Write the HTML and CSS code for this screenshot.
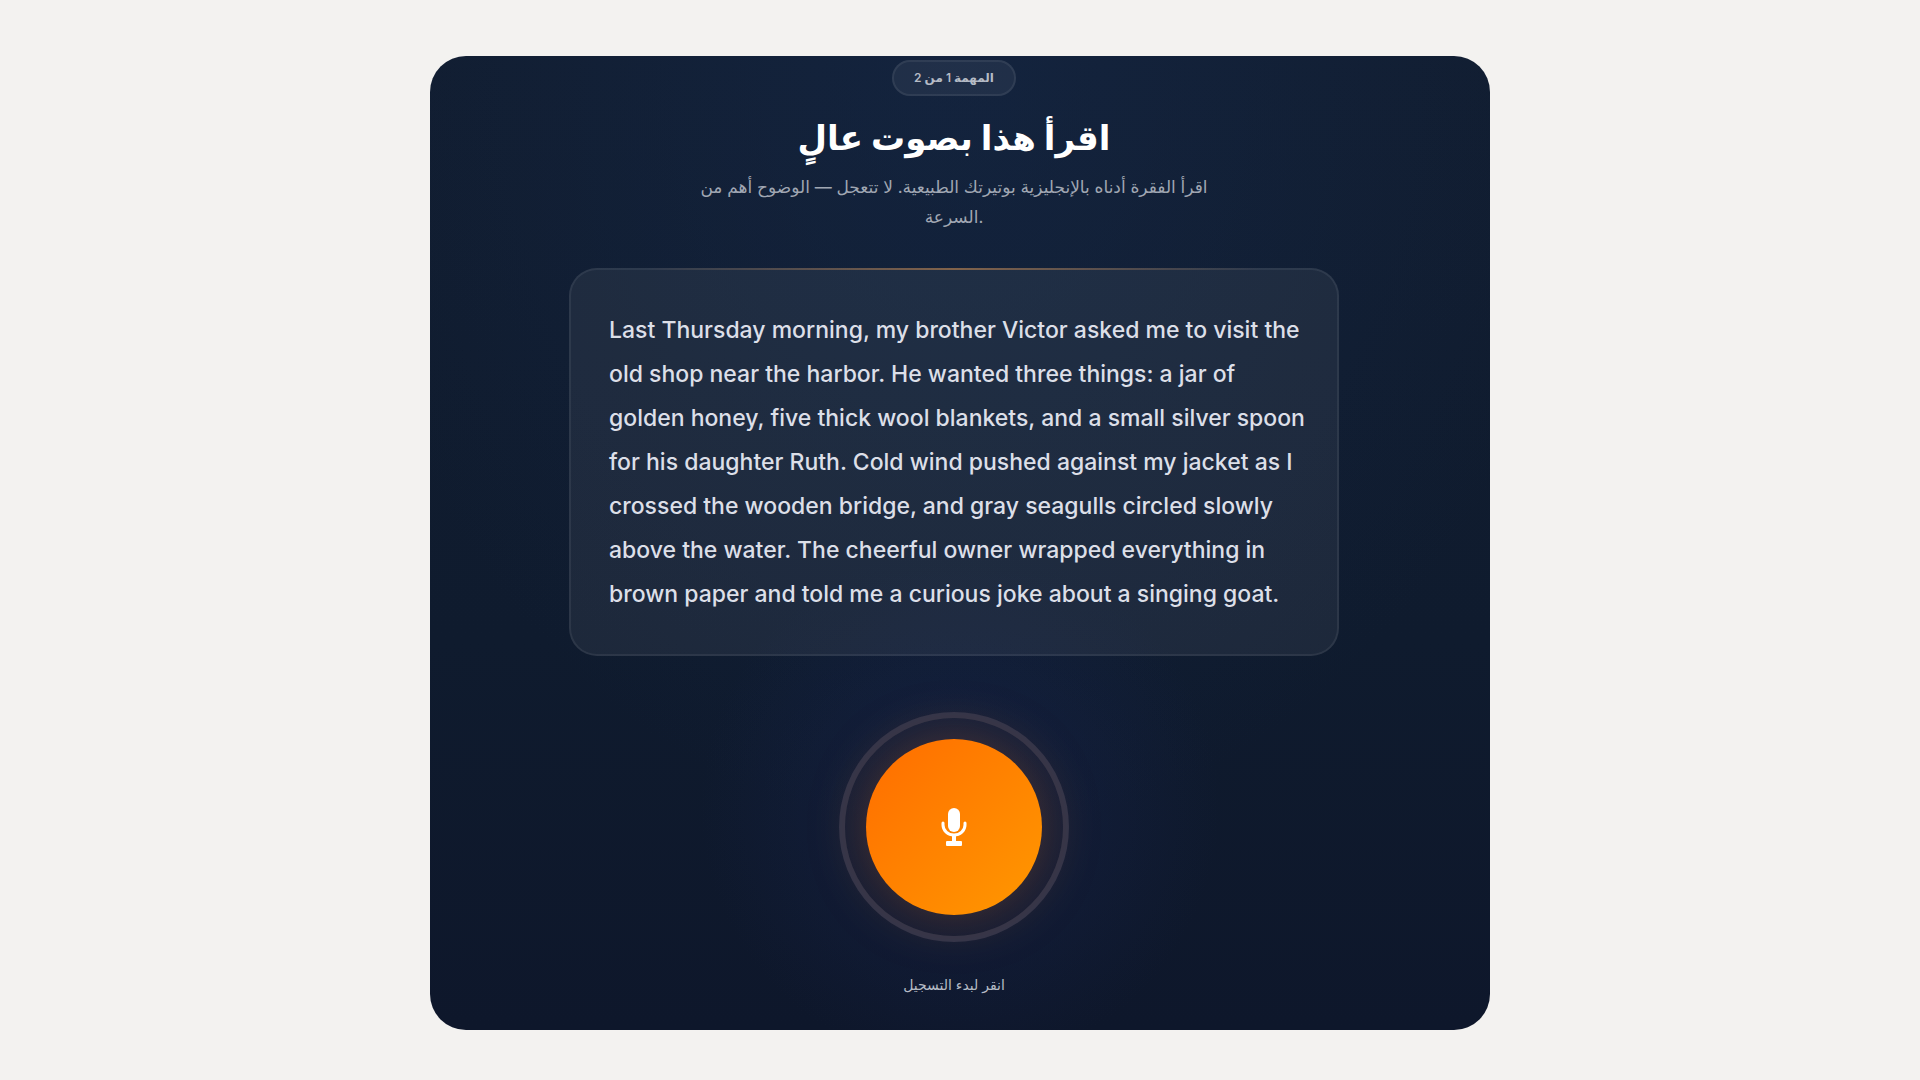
FILE: index.html
```html
<!DOCTYPE html>
<html lang="ar">

<head>
    <meta charset="UTF-8">
    <meta name="viewport" content="width=device-width, initial-scale=1.0">
    <title>اقرأ هذا بصوت عالٍ</title>
    <link rel="stylesheet" href="styles.css">
</head>

<body>
    <main class="panel">
        <span class="badge">المهمة 1 من 2</span>
        <h1>اقرأ هذا بصوت عالٍ</h1>
        <p class="intro">اقرأ الفقرة أدناه بالإنجليزية بوتيرتك الطبيعية. لا تتعجل — الوضوح أهم من السرعة.</p>

        <section class="passage" lang="en">
            <p>Last Thursday morning, my brother Victor asked me to visit the<br>
                old shop near the harbor. He wanted three things: a jar of<br>
                golden honey, five thick wool blankets, and a small silver spoon<br>
                for his daughter Ruth. Cold wind pushed against my jacket as I<br>
                crossed the wooden bridge, and gray seagulls circled slowly<br>
                above the water. The cheerful owner wrapped everything in<br>
                brown paper and told me a curious joke about a singing goat.</p>
        </section>

        <div class="ring">
            <button class="record" id="record" type="button" aria-labelledby="record-label">
                <svg viewBox="0 0 26 38" aria-hidden="true">
                    <rect x="7" y="0" width="12" height="24" rx="6" fill="#fff"/>
                    <path d="M2 15v2a11 10 0 0 0 22 0v-2" fill="none" stroke="#fff" stroke-width="3" stroke-linecap="round"/>
                    <path d="M11 27h4v6h5a1 1 0 0 1 1 1v3a1 1 0 0 1-1 1H6a1 1 0 0 1-1-1v-3a1 1 0 0 1 1-1h5z" fill="#fff"/>
                </svg>
            </button>
        </div>
        <label class="hint" id="record-label" for="record">انقر لبدء التسجيل</label>
    </main>
</body>

</html>
```
FILE: styles.css
```css
:root {
    --s1: 4px;
    --s2: 12px;
    --s3: 28px;
    --s4: 36px;
    --line: rgba(255, 255, 255, 0.07);
    --glass: rgba(255, 255, 255, 0.06);
}
* {
    box-sizing: border-box;
}
body {
    margin: 0;
    min-height: 100vh;
    padding: 56px 16px 50px;
    background: #f3f2f0;
    font-family: Inter, "Liberation Sans", "DejaVu Sans", sans-serif;
    color: white;
}
h1,
p {
    margin: 0;
}
.panel {
    display: flex;
    flex-direction: column;
    align-items: center;
    max-width: 1060px;
    min-height: calc(100vh - 106px);
    margin: 0 auto;
    padding: var(--s1) var(--s2) 16px 0;
    border-radius: 36px;
    background:
        radial-gradient(circle 260px at 50% 77%, rgba(24, 36, 80, 0.5), transparent),
        radial-gradient(ellipse 60% 80% at 50% 0, rgba(22, 42, 76, 0.5), transparent),
        linear-gradient(180deg, #111d30 0%, #0f1b2e 60%, #0e172b 100%);
    text-align: center;
}
.badge {
    padding: 0 20px;
    border: 2px solid var(--line);
    border-radius: 20px;
    background: var(--glass);
    color: #b5bbc5;
    font-size: 12px;
    font-weight: 600;
    line-height: 32px;
}
h1 {
    margin-top: var(--s2);
    font-size: 34px;
    font-weight: 700;
    line-height: 60px;
}
.intro {
    max-width: 520px;
    margin-top: var(--s1);
    color: #a0a7b3;
    font-size: 17px;
    line-height: 30px;
}
.passage {
    width: 100%;
    max-width: 770px;
    margin-top: var(--s4);
    padding: 38px 28px 38px 38px;
    border: 2px solid var(--line);
    border-radius: 28px;
    background:
        linear-gradient(90deg, transparent 10%, rgba(255, 150, 50, 0.4), transparent 90%) top / 100% 2px no-repeat border-box,
        var(--glass);
    color: #dcdfe8;
    font-size: 23px;
    font-weight: 500;
    line-height: 44px;
    text-align: left;
}
.ring {
    display: grid;
    place-items: center;
    width: 230px;
    height: 230px;
    margin-top: 56px;
    border: 6px solid #2e334b;
    border-radius: 50%;
}
.record {
    display: grid;
    place-items: center;
    width: 176px;
    height: 176px;
    padding: 0;
    border: 0;
    border-radius: 50%;
    background: linear-gradient(135deg, #ff6d00, #ff9800);
    box-shadow: 0 0 60px rgba(255, 120, 20, 0.26);
    cursor: pointer;
}
.record svg {
    width: 26px;
    height: 38px;
}
.hint {
    margin-top: var(--s3);
    color: #b5bbc5;
    font-size: 14px;
    line-height: 30px;
}
@media (max-width: 800px) {
    .passage br {
        display: none;
    }
}
```
